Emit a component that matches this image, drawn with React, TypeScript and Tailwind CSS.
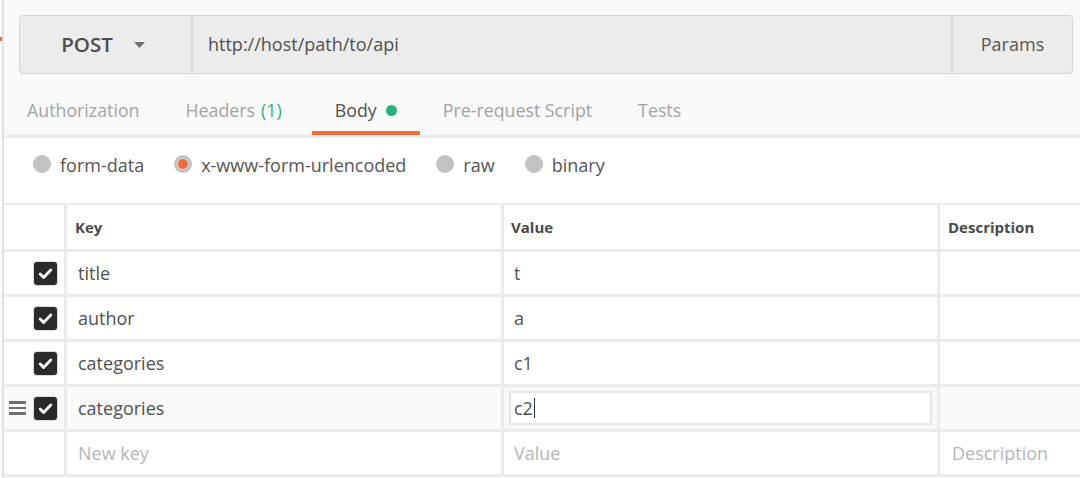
import React from "react";

const rows = [
  { key: "title", value: "t" },
  { key: "author", value: "a" },
  { key: "categories", value: "c1" },
  { key: "categories", value: "c2", active: true },
];

const tabs = [
  { label: "Authorization" },
  { label: "Headers", count: "(1)" },
  { label: "Body", active: true },
  { label: "Pre-request Script" },
  { label: "Tests" },
];

const modes = [
  { label: "form-data" },
  { label: "x-www-form-urlencoded", selected: true },
  { label: "raw" },
  { label: "binary" },
];

export default function App() {
  return (
    <div className="flex h-[478px] w-[1080px] overflow-hidden bg-white font-['Open_Sans',sans-serif] text-[#505050]">
      {/* left edge of the sidebar */}
      <div className="w-[2px] shrink-0 bg-[#fbfbfb]">
        <div className="mt-[37px] h-[4px] bg-[#f26b3a]" />
      </div>
      <div className="w-[2px] shrink-0 bg-[#e2e2e2]" />

      <div className="flex min-w-0 flex-1 flex-col">
        {/* request bar + tabs */}
        <div className="bg-[#f9f9f9]">
          <div className="pl-[15px] pr-[7px] pt-[15px]">
            <div className="flex h-[59px] overflow-hidden rounded-[4px] border border-[#d5d5d5] bg-[#ececec]">
              <div className="flex w-[173px] shrink-0 items-center justify-center gap-[21px] border-r-2 border-[#d8d8d8] pr-[5px]">
                <span className="text-[20.5px] font-semibold text-[#4d4d4d]">POST</span>
                <svg width="11" height="6" viewBox="0 0 11 6">
                  <path d="M0 0h11L5.5 6z" fill="#707070" />
                </svg>
              </div>
              <div className="flex flex-1 items-center pl-[15px] text-[18px] text-[#505050]">
                http://host/path/to/api
              </div>
              <div className="flex w-[121px] shrink-0 items-center justify-center border-l-2 border-[#d8d8d8] text-[18px] text-[#555]">
                Params
              </div>
            </div>
          </div>

          <div className="mt-[1px] flex h-[60px]">
            {tabs.map((t) => (
              <div
                key={t.label}
                className={`relative flex items-start px-[23px] pt-[25px] text-[17.8px] leading-[20px] ${
                  t.active ? "text-[#505050]" : "text-[#a3a3a3]"
                } ${t.count ? "mr-[7px]" : ""}`}
              >
                <span>{t.label}</span>
                {t.count && <span className="ml-[6px] text-[#2bb37d]">{t.count}</span>}
                {t.active && (
                  <span className="ml-[9px] mt-[5px] h-[11px] w-[11px] rounded-full bg-[#26b27c]" />
                )}
                {t.active && (
                  <div className="absolute bottom-0 left-0 right-0 h-[4px] bg-[#f26b3a]" />
                )}
              </div>
            ))}
          </div>
          <div className="h-[3px] bg-[#ebebeb]" />
        </div>

        {/* body type radios */}
        <div className="flex h-[65px] items-start gap-[30px] bg-white pl-[29px] pt-[15px]">
          {modes.map((m) => (
            <div key={m.label} className="flex h-[22px] items-center gap-[9px]">
              <span className="flex h-[18px] w-[18px] items-center justify-center rounded-full bg-[#c2c2c2]">
                {m.selected && (
                  <span className="h-[10px] w-[10px] rounded-full bg-[#f26b3a] ring-1 ring-[#d6d6d6]" />
                )}
              </span>
              <span className="pt-[2px] text-[18px] leading-[22px] text-[#555]">{m.label}</span>
            </div>
          ))}
        </div>

        {/* key / value table */}
        <div className="grid grid-cols-[60px_434px_433px_1fr] gap-[3px] border-y-2 border-[#ebebeb] bg-[#ebebeb] [border-bottom-width:3px]">
          <div className="h-[44px] bg-white" />
          <div className="flex h-[44px] items-center bg-white pl-[8px] text-[15px] font-bold text-[#4a4a4a]">Key</div>
          <div className="flex h-[44px] items-center bg-white pl-[7px] text-[15px] font-bold text-[#4a4a4a]">Value</div>
          <div className="flex h-[44px] items-center bg-white pl-[8px] text-[15px] font-bold text-[#4a4a4a]">Description</div>

          {rows.map((r, i) => {
            const bg = r.active ? "bg-[#f9f9f9]" : "bg-white";
            return (
              <React.Fragment key={i}>
                <div className={`flex h-[42px] items-center pl-[5px] pr-[7px] ${bg}`}>
                  {r.active && (
                    <div className="flex w-[17px] flex-col gap-[3px]">
                      <span className="h-[2.5px] bg-[#6f6f6f]" />
                      <span className="h-[2.5px] bg-[#6f6f6f]" />
                      <span className="h-[2.5px] bg-[#6f6f6f]" />
                    </div>
                  )}
                  <Checkbox />
                </div>
                <div className={`flex h-[42px] items-center pl-[11px] text-[18px] ${bg}`}>{r.key}</div>
                <div className={`flex h-[42px] items-center ${bg} ${r.active ? "px-[5px]" : "pl-[10px]"}`}>
                  {r.active ? (
                    <div className="flex h-[34px] w-full items-center border-2 border-[#e6e6e6] bg-white pl-[3px] text-[18px]">
                      {r.value}
                      <span className="ml-[1px] h-[20px] w-[1.5px] bg-[#333]" />
                    </div>
                  ) : (
                    <span className="text-[18px]">{r.value}</span>
                  )}
                </div>
                <div className={`h-[42px] ${bg}`} />
              </React.Fragment>
            );
          })}

          <div className="h-[42px] bg-white" />
          <div className="flex h-[42px] items-center bg-white pl-[11px] text-[18px] text-[#b5b5b5]">New key</div>
          <div className="flex h-[42px] items-center bg-white pl-[10px] text-[18px] text-[#b5b5b5]">Value</div>
          <div className="flex h-[42px] items-center bg-white pl-[12px] text-[18px] text-[#b5b5b5]">Description</div>
        </div>
      </div>
    </div>
  );
}

function Checkbox() {
  return (
    <div className="ml-auto flex h-[23px] w-[23px] items-center justify-center rounded-[3px] bg-[#2a2a2a] ring-1 ring-[#dcdcdc]">
      <svg width="17" height="17" viewBox="0 0 16 16" fill="none">
        <path
          d="M3 8.5l3.2 3.2L13 4.8"
          stroke="#fff"
          strokeWidth="2.7"
          strokeLinecap="round"
          strokeLinejoin="round"
        />
      </svg>
    </div>
  );
}
